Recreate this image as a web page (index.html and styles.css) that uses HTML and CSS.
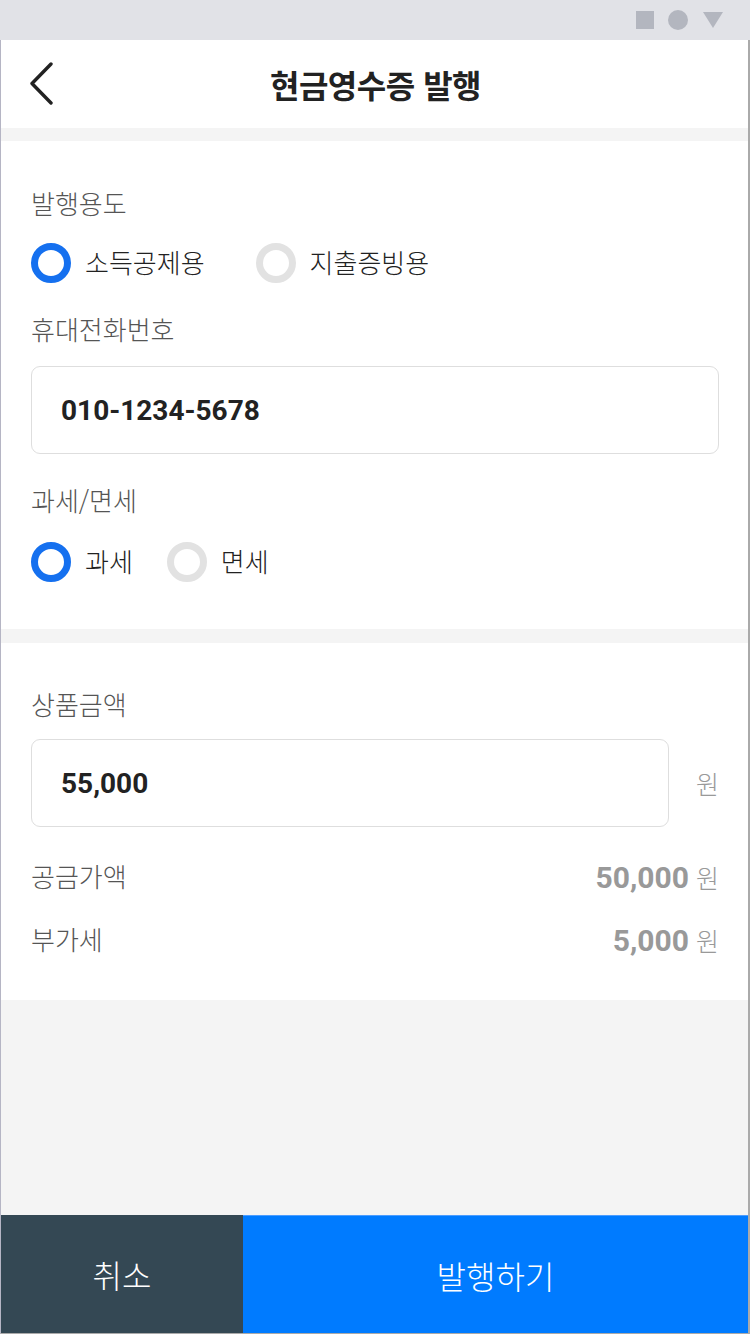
FILE: index.html
```html
<!DOCTYPE html>
<html lang="ko">
<head>
  <meta charset="UTF-8" />
  <meta name="viewport" content="width=device-width, initial-scale=1.0"/>
  <title>현금영수증 발행</title>
  <link rel="stylesheet" href="styles.css">
</head>
<body>
  <div class="screen">
    <div class="status-bar">
      <span class="sb-square"></span>
      <span class="sb-circle"></span>
      <span class="sb-triangle"></span>
    </div>

    <div class="app">
      <header class="top-bar">
        <button class="back-btn" type="button" aria-label="뒤로">
          <svg width="30" height="44" viewBox="0 0 30 44">
            <path d="M22 3 L3 22.5 L22 42" fill="none" stroke="#222" stroke-width="3.4" stroke-linecap="round" stroke-linejoin="round"/>
          </svg>
        </button>
        <h1 class="title">현금영수증 발행</h1>
      </header>

      <section class="card card-first">
        <div class="label">발행용도</div>
        <div class="radio-row wide">
          <label class="radio checked"><span class="dot"></span><span class="radio-text">소득공제용</span></label>
          <label class="radio"><span class="dot"></span><span class="radio-text">지출증빙용</span></label>
        </div>

        <div class="label gap-lg">휴대전화번호</div>
        <div class="field">010-1234-5678</div>

        <div class="label gap-lg">과세/면세</div>
        <div class="radio-row narrow">
          <label class="radio checked"><span class="dot"></span><span class="radio-text">과세</span></label>
          <label class="radio"><span class="dot"></span><span class="radio-text">면세</span></label>
        </div>
      </section>

      <section class="card card-second">
        <div class="label">상품금액</div>
        <div class="amount-row">
          <div class="field">55,000</div>
          <span class="unit">원</span>
        </div>

        <div class="sum-row first">
          <span class="sum-label">공금가액</span>
          <span class="sum-value">50,000 <span class="unit">원</span></span>
        </div>
        <div class="sum-row">
          <span class="sum-label">부가세</span>
          <span class="sum-value">5,000 <span class="unit">원</span></span>
        </div>
      </section>

      <div class="filler"></div>

      <footer class="actions">
        <button class="btn-cancel" type="button">취소</button>
        <button class="btn-issue" type="button">발행하기</button>
      </footer>
    </div>
  </div>
</body>
</html>
```

FILE: styles.css
```css
* { margin: 0; padding: 0; box-sizing: border-box; }
html, body { width: 750px; height: 1334px; overflow: hidden; }
body {
  font-family: "Noto Sans CJK KR", "Noto Sans", Roboto, sans-serif;
  background: #fff; color: #222;
}

.screen { width: 750px; height: 1334px; display: flex; flex-direction: column; }

.status-bar {
  height: 40px; background: #e1e2e7;
  display: flex; align-items: center; justify-content: flex-end;
  padding-right: 27px; gap: 14px;
}
.sb-square { width: 18px; height: 18px; background: #b3b6bf; }
.sb-circle { width: 20px; height: 20px; border-radius: 50%; background: #b3b6bf; margin-right: 1px; }
.sb-triangle {
  width: 0; height: 0;
  border-left: 10px solid transparent; border-right: 10px solid transparent;
  border-top: 16px solid #b3b6bf;
}

.app {
  flex: 1; display: flex; flex-direction: column;
  border-left: 1px solid #b5b5c4; border-right: 2px solid #aaa; border-bottom: 1px solid #aaa;
  background: #f4f4f4;
}

.top-bar {
  height: 88px; background: #fff; position: relative;
  display: flex; align-items: center; justify-content: center;
  margin-bottom: 13px;
}
.back-btn {
  position: absolute; left: 28px; top: 21px;
  background: none; border: none; width: 30px; height: 44px; cursor: pointer;
}
.back-btn svg { display: block; }
.title { font-size: 32px; font-weight: 700; color: #222; letter-spacing: -0.5px; margin-left: 2px; }

.card { background: #fff; padding: 0 29px 0 30px; }
.card-first { padding-top: 44px; padding-bottom: 47px; margin-bottom: 14px; }
.card-second { padding-top: 43px; padding-bottom: 40px; }

.label { height: 40px; line-height: 36px; font-size: 26px; font-weight: 300; color: #555; }
.label.gap-lg { margin-top: 28px; }

.radio-row { display: flex; align-items: center; height: 40px; margin-top: 18px; }
.radio-row.wide { gap: 51px; }
.radio-row.narrow { gap: 34px; margin-top: 20px; }
.radio { display: flex; align-items: center; font-size: 26px; font-weight: 300; color: #222; height: 40px; }
.radio-text { padding-bottom: 3px; }
.dot {
  width: 40px; height: 40px; border-radius: 50%;
  border: 7px solid #e2e2e2; margin-right: 14px; flex-shrink: 0;
}
.radio.checked .dot { border-color: #1570ef; }

.field {
  height: 88px; margin-top: 15px;
  border: 1.5px solid #dedede; border-radius: 9px;
  display: flex; align-items: center; padding-left: 29px;
  font-family: Roboto, "Noto Sans", sans-serif; font-weight: 700; font-size: 28px; color: #222;
}

.amount-row { display: flex; align-items: center; margin-top: 13px; }
.amount-row .field { flex: 1; margin-top: 0; margin-right: 27px; }
.unit { font-size: 25px; color: #999; font-weight: 300; font-family: "Noto Sans CJK KR", sans-serif; }

.sum-row { display: flex; justify-content: space-between; align-items: center; height: 40px; margin-top: 23px; }
.sum-row.first { margin-top: 30px; }
.sum-label { font-size: 26px; font-weight: 300; color: #555; padding-bottom: 3px; }
.sum-value {
  font-family: Roboto, "Noto Sans", sans-serif; font-weight: 700; font-size: 30px; color: #999;
  display: flex; align-items: center; gap: 7px;
}

.filler { flex: 1; background: #f4f4f4; }

.actions { display: flex; height: 118px; }
.actions button {
  border: none; color: #fff; font-size: 32px; font-weight: 300; cursor: pointer;
  font-family: "Noto Sans CJK KR", sans-serif;
}
.btn-cancel { width: 242px; background: #344854; }
.btn-issue { flex: 1; background: #007bff; border-top: 1px solid #4a9cff !important; }
```
